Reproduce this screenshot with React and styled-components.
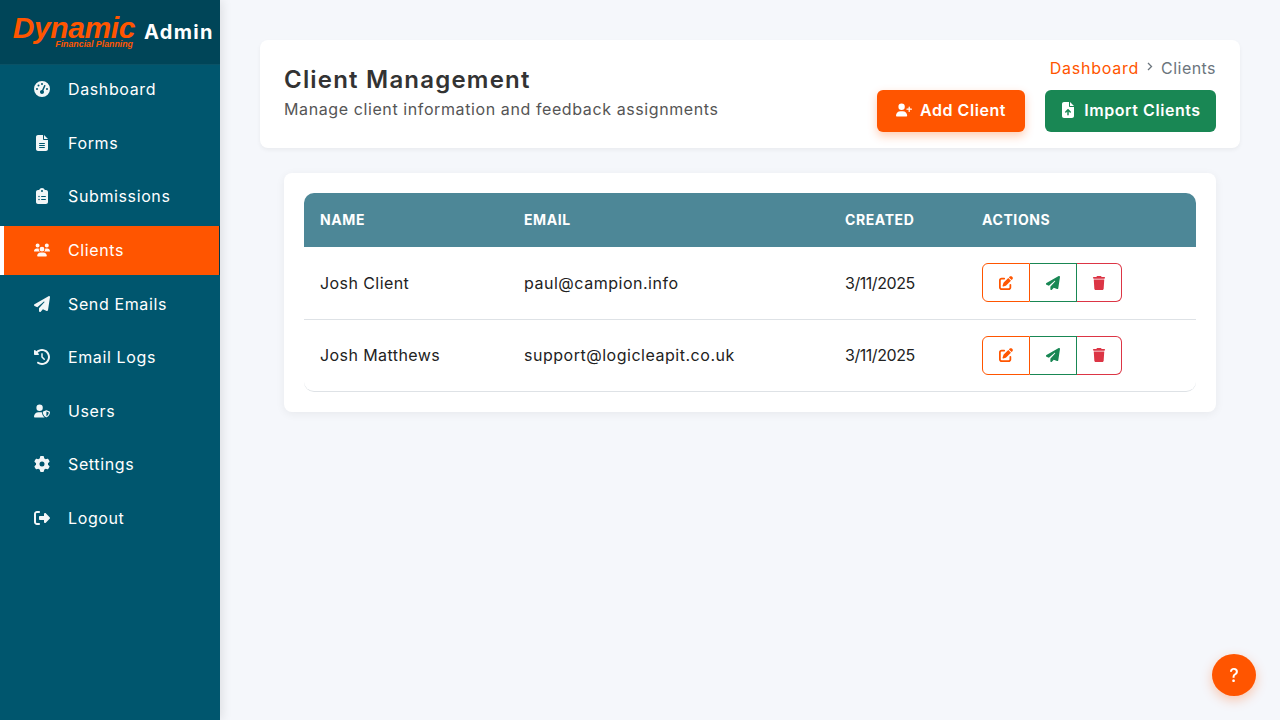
import React from "react";
import styled, { createGlobalStyle } from "styled-components";
import {
  FaGaugeHigh, FaFileLines, FaClipboardList, FaUsers, FaPaperPlane, FaClockRotateLeft,
  FaUserShield, FaGear, FaRightFromBracket, FaUserPlus, FaFileArrowUp, FaPenToSquare, FaTrash,
} from "react-icons/fa6";

const Global = createGlobalStyle`
  html, body { margin: 0; padding: 0; height: 100%; }
  body { font-family: Inter, "Open Sans", sans-serif; background: #f5f7fb; color: #222; }
  * { box-sizing: border-box; }
`;

const Shell = styled.div`
  display: flex;
  height: 720px;
  overflow: hidden;
`;

const Sidebar = styled.aside`
  width: 220px;
  flex: none;
  background: #00566e;
  box-shadow: 2px 0 10px rgba(0, 0, 0, 0.1);
  display: flex;
  flex-direction: column;
`;

const Brand = styled.div`
  height: 65px;
  background: #004558;
  border-bottom: 1px solid #0a5266;
  display: flex;
  align-items: center;
  padding: 0 0 0 17px;
  gap: 9px;
`;

const LogoMark = styled.div`
  display: flex;
  flex-direction: column;
  align-items: flex-end;
  width: 118px;
  color: #ff5500;
  font-family: "Liberation Sans", sans-serif;
  font-style: italic;
  font-weight: 700;
`;

const LogoName = styled.span`
  font-size: 30px;
  line-height: 24px;
  letter-spacing: -0.4px;
  white-space: nowrap;
`;

const LogoTag = styled.span`
  font-size: 8.8px;
  line-height: 9px;
  margin-right: 2px;
  white-space: nowrap;
`;

const BrandTitle = styled.span`
  color: #fff;
  font-size: 20px;
  font-weight: 700;
  letter-spacing: 1.3px;
`;

const Nav = styled.nav`
  display: flex;
  flex-direction: column;
`;

const NavItem = styled.a`
  height: 49.6px;
  margin-bottom: 4px;
  display: flex;
  align-items: center;
  padding-left: ${(p) => (p.$active ? "28px" : "32px")};
  padding-bottom: 1px;
  gap: 16px;
  color: #fff;
  font-size: 16px;
  letter-spacing: 0.62px;
  background: ${(p) => (p.$active ? "#ff5500" : "transparent")};
  border-left: ${(p) => (p.$active ? "4px solid #fff" : "none")};
  border-right: ${(p) => (p.$active ? "1px solid #00384a" : "none")};
`;

const NavIcon = styled.span`
  width: 20px;
  display: flex;
  justify-content: center;
  opacity: 0.95;
  svg { height: 16px; width: auto; }
`;

const Main = styled.main`
  flex: 1;
  padding: 40px;
  min-width: 0;
`;

const HeaderCard = styled.header`
  height: 108px;
  background: #fff;
  border-radius: 8px;
  box-shadow: 0 2px 4px rgba(0, 0, 0, 0.05);
  padding: 18px 24px 16px;
  display: flex;
  justify-content: space-between;
  align-items: stretch;
`;

const TitleBlock = styled.div`
  display: flex;
  flex-direction: column;
  justify-content: center;
  gap: 5px;
  padding-bottom: 6px;
`;

const Title = styled.h1`
  margin: 0;
  font-size: 24px;
  line-height: 28px;
  font-weight: 600;
  color: #333;
  letter-spacing: 1.2px;
`;

const Subtitle = styled.p`
  margin: 0;
  font-size: 16px;
  line-height: 20px;
  color: #555;
  letter-spacing: 0.6px;
`;

const HeaderRight = styled.div`
  display: flex;
  flex-direction: column;
  align-items: flex-end;
  justify-content: space-between;
`;

const Breadcrumb = styled.div`
  display: flex;
  align-items: center;
  font-size: 16px;
  line-height: 20px;
  gap: 8px;
`;

const Crumb = styled.span`
  color: ${(p) => (p.$link ? "#ff5500" : "#6c757d")};
  letter-spacing: ${(p) => (p.$link ? "0.75px" : "0.45px")};
`;

const Chevron = styled.svg`
  width: 6px;
  height: 9px;
  margin-top: -3px;
`;

const Actions = styled.div`
  display: flex;
  gap: 20px;
`;

const Button = styled.button`
  height: 42px;
  width: ${(p) => p.$w}px;
  border: none;
  border-radius: 6px;
  background: ${(p) => p.$bg};
  box-shadow: ${(p) => p.$shadow || "none"};
  color: #fff;
  font: 600 16px Inter, sans-serif;
  letter-spacing: 0.55px;
  display: flex;
  align-items: center;
  justify-content: center;
  gap: 8px;
  padding: 0 0 2px;
  svg { height: 16px; width: auto; }
`;

const TableCard = styled.section`
  margin: 25px 24px 0;
  padding: 20px;
  background: #fff;
  border-radius: 8px;
  box-shadow: 0 2px 10px rgba(0, 0, 0, 0.06);
`;

const TableWrap = styled.div`
  border-radius: 10px;
  overflow: hidden;
  border-bottom: 1px solid #dee2e6;
`;

const Table = styled.table`
  width: 100%;
  border-collapse: collapse;
  table-layout: fixed;
`;

const Th = styled.th`
  height: 54px;
  background: #4d8797;
  color: #fff;
  text-align: left;
  padding: 0 16px 2px;
  font-size: 14px;
  font-weight: 700;
  letter-spacing: 0.6px;
  width: ${(p) => p.$w}px;
`;

const Row = styled.tr`
  border-bottom: 1px solid #dee2e6;
  &:last-child { border-bottom: none; }
`;

const Td = styled.td`
  height: 72px;
  padding: 0 16px;
  font-size: 16px;
  letter-spacing: ${(p) => p.$ls || "0.42px"};
  color: #222;
`;

const ButtonGroup = styled.div`
  display: inline-flex;
  vertical-align: middle;
  height: 39px;
`;

const IconButton = styled.button`
  width: ${(p) => p.$w}px;
  height: 39px;
  background: #fff;
  color: ${(p) => p.$color};
  border: 1px solid ${(p) => p.$color};
  border-left-width: ${(p) => (p.$first ? "1px" : "0")};
  border-radius: ${(p) => (p.$first ? "6px 0 0 6px" : p.$last ? "0 6px 6px 0" : "0")};
  display: flex;
  align-items: center;
  justify-content: center;
  padding: 0;
  svg { height: 14px; width: auto; }
`;

const HelpButton = styled.button`
  position: fixed;
  right: 24px;
  bottom: 24px;
  width: 44px;
  height: 42px;
  border: none;
  border-radius: 50%;
  background: #ff5500;
  box-shadow: 0 4px 12px rgba(255, 85, 0, 0.3);
  color: #fff;
  font: 500 18px Inter, sans-serif;
  padding: 0;
`;

const items = [
  ["Dashboard", FaGaugeHigh],
  ["Forms", FaFileLines],
  ["Submissions", FaClipboardList],
  ["Clients", FaUsers, true],
  ["Send Emails", FaPaperPlane],
  ["Email Logs", FaClockRotateLeft],
  ["Users", FaUserShield],
  ["Settings", FaGear],
  ["Logout", FaRightFromBracket],
];

const clients = [
  ["Josh Client", "paul@campion.info", "3/11/2025"],
  ["Josh Matthews", "support@logicleapit.co.uk", "3/11/2025"],
];

export default function App() {
  return (
    <Shell>
      <Global />
      <Sidebar>
        <Brand>
          <LogoMark>
            <LogoName>Dynamic</LogoName>
            <LogoTag>Financial Planning</LogoTag>
          </LogoMark>
          <BrandTitle>Admin</BrandTitle>
        </Brand>
        <Nav>
          {items.map(([label, Icon, active]) => (
            <NavItem key={label} $active={active}>
              <NavIcon><Icon /></NavIcon>
              {label}
            </NavItem>
          ))}
        </Nav>
      </Sidebar>
      <Main>
        <HeaderCard>
          <TitleBlock>
            <Title>Client Management</Title>
            <Subtitle>Manage client information and feedback assignments</Subtitle>
          </TitleBlock>
          <HeaderRight>
            <Breadcrumb>
              <Crumb $link>Dashboard</Crumb>
              <Chevron viewBox="0 0 6 9" fill="none" stroke="#6c757d" strokeWidth="1.3">
                <path d="M1 1l3.5 3.5L1 8" />
              </Chevron>
              <Crumb>Clients</Crumb>
            </Breadcrumb>
            <Actions>
              <Button $w={148} $bg="#ff5500" $shadow="0 4px 10px rgba(255,85,0,0.3)">
                <FaUserPlus /> Add Client
              </Button>
              <Button $w={171} $bg="#198754">
                <FaFileArrowUp /> Import Clients
              </Button>
            </Actions>
          </HeaderRight>
        </HeaderCard>
        <TableCard>
          <TableWrap>
            <Table>
              <thead>
                <tr>
                  <Th $w={204}>NAME</Th>
                  <Th $w={321}>EMAIL</Th>
                  <Th $w={137}>CREATED</Th>
                  <Th $w={230}>ACTIONS</Th>
                </tr>
              </thead>
              <tbody>
                {clients.map(([name, email, date]) => (
                  <Row key={name}>
                    <Td>{name}</Td>
                    <Td $ls="0.52px">{email}</Td>
                    <Td $ls="-0.45px">{date}</Td>
                    <Td>
                      <ButtonGroup>
                        <IconButton $w={48} $color="#ff5500" $first><FaPenToSquare /></IconButton>
                        <IconButton $w={47} $color="#198754"><FaPaperPlane /></IconButton>
                        <IconButton $w={45} $color="#dc3545" $last><FaTrash /></IconButton>
                      </ButtonGroup>
                    </Td>
                  </Row>
                ))}
              </tbody>
            </Table>
          </TableWrap>
        </TableCard>
      </Main>
      <HelpButton>?</HelpButton>
    </Shell>
  );
}
